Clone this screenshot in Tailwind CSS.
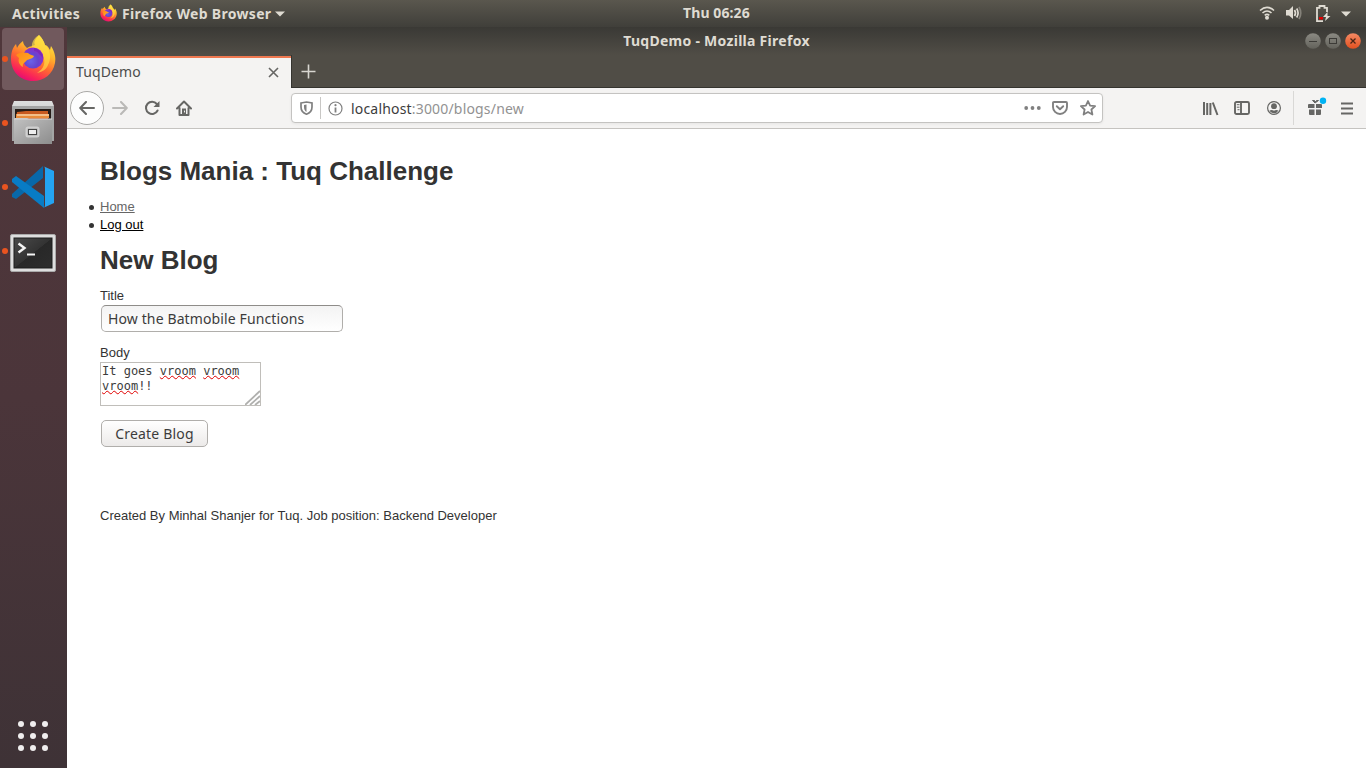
<!DOCTYPE html>
<html lang="en">
<head>
<meta charset="utf-8">
<title>TuqDemo</title>
<script src="https://cdn.jsdelivr.net/npm/@tailwindcss/browser@4"></script>
</head>
<body class="w-[1366px] h-[768px] overflow-hidden flex flex-col bg-white font-['Noto_Sans',sans-serif]">
<svg class="absolute w-0 h-0">
  <defs>
    <linearGradient id="flame" x1="0.8" y1="0" x2="0.3" y2="1"><stop offset="0" stop-color="#fff24a"/><stop offset=".35" stop-color="#ffb52b"/><stop offset=".6" stop-color="#ff6a30"/><stop offset=".85" stop-color="#fa2458"/><stop offset="1" stop-color="#e00b78"/></linearGradient>
    <linearGradient id="fox" x1="0" y1="0" x2="1" y2="1"><stop offset="0" stop-color="#ff8a16"/><stop offset="1" stop-color="#ffb129"/></linearGradient>
    <radialGradient id="globe" cx=".4" cy=".65" r=".7"><stop offset="0" stop-color="#6a62e8"/><stop offset=".5" stop-color="#6545ce"/><stop offset="1" stop-color="#9a27cf"/></radialGradient>
    <linearGradient id="metal" x1="0" y1="0" x2="1" y2="1"><stop offset="0" stop-color="#c2c2c2"/><stop offset="1" stop-color="#8d8d8d"/></linearGradient>
    <linearGradient id="metaltop" x1="0" y1="0" x2="0" y2="1"><stop offset="0" stop-color="#dedede"/><stop offset="1" stop-color="#a9a9a9"/></linearGradient>
    <linearGradient id="term" x1="0" y1="0" x2="1" y2="1"><stop offset="0" stop-color="#4a4a4a"/><stop offset=".5" stop-color="#333"/><stop offset=".51" stop-color="#282828"/><stop offset="1" stop-color="#2d2d2d"/></linearGradient>
    <linearGradient id="btn" x1="0" y1="0" x2="0" y2="1"><stop offset="0" stop-color="#8b8a83"/><stop offset="1" stop-color="#63625b"/></linearGradient>
    <linearGradient id="btnclose" x1="0" y1="0" x2="0" y2="1"><stop offset="0" stop-color="#f58a64"/><stop offset="1" stop-color="#e2501f"/></linearGradient>
    <symbol id="firefox" viewBox="0 0 46 48">
      <path d="M29 1C32 4 34 7 35 11C37 11 39 14 40 16L41 12C45 18 46 24 45 29C43 40 34 47 23 47C10 47 1 37 1 25C1 18 3 13 6 10L7 14C8 12 10 9 13 7C13 10 15 12 17 14C20 12 23 12 25 11C23 8 26 4 29 1Z" fill="url(#flame)"/>
      <path d="M29 1C32 4 34 7 35 11C40 15 42 24 38 31C36 36 32 38 27 39C34 35 36 28 33 22C30 16 24 15 22 14C21 8 25 3 29 1Z" fill="#ffe143" opacity=".65"/>
      <circle cx="23" cy="24" r="10.5" fill="url(#globe)"/>
      <path d="M6 21C9 18 14 18 18 19C20 21 23 21 24 22C23 25 19 25 17 26C15 29 12 29 13 33C9 31 8 27 9 24Z" fill="url(#fox)"/>
      <path d="M24 14C29 15 33 19 33 24L29 20C28 18 26 17 24 17Z" fill="#7a2bb8"/>
    </symbol>
  </defs>
</svg>

<header class="h-[27px] shrink-0 flex items-center relative bg-linear-to-b from-[#5a574e] to-[#403f3a] text-[#dfdbd2] text-[14px] font-bold leading-none">
  <span class="ml-3 w-[88px] whitespace-nowrap tracking-[0.3px]">Activities</span>
  <svg class="w-[17px] h-[18px] mr-[5px] -mt-0.5"><use href="#firefox"/></svg>
  <span class="w-[149px] whitespace-nowrap tracking-[0.32px]">Firefox Web Browser</span>
  <svg class="ml-[3px]" width="12" height="6"><path d="M1 0.5h10L6 5.5z" fill="#dfdbd2"/></svg>
  <span class="absolute left-[683px] top-[6px] whitespace-nowrap tracking-[0.1px]">Thu 06:26</span>
  <div class="ml-auto mr-[14px] flex items-center text-[#dfdbd2]">
    <svg class="-mt-px" width="16" height="16" viewBox="0 0 16 16" fill="none" stroke="#dfdbd2" stroke-width="1.6"><path d="M1 5.5Q8 -.8 15 5.5" /><path d="M3.500 8Q8 4 12.500 8"/><path d="M5.700 10.300Q8 8.300 10.300 10.300"/><circle cx="8" cy="12.700" r="2" fill="#dfdbd2" stroke="none"/></svg>
    <svg class="ml-[11px] -mt-px" width="16" height="16" viewBox="0 0 16 16" fill="none" stroke="#dfdbd2" stroke-width="1.700"><path d="M0 5h3l4-4v13l-4-3.500H0z" fill="#dfdbd2" stroke="none"/><path d="M8.500 5Q10.500 8 8.500 11M10.700 3.500Q13.500 8 10.700 12.500"/><path d="M13 2Q16.500 8 13 14" stroke="#85827a"/></svg>
    <svg class="ml-[13px] -mt-[2px]" width="16" height="18" viewBox="0 0 16 18"><path d="M8 17.200H2V3.800H4.500V2H9.500v1.800H12V8" fill="none" stroke="#dfdbd2" stroke-width="1.800"/><path d="M4 13h4v2.500H4z" fill="#e00000"/><path d="M12.500 8L8 13h3l-1 4L15.500 12h-3z" fill="#dfdbd2"/></svg>
    <svg class="ml-[9px]" width="12" height="6"><path d="M1 0.500h10L6 5.500z" fill="#dfdbd2"/></svg>
  </div>
</header>

<div class="flex flex-1 min-h-0">
  <aside class="w-[67px] shrink-0 flex flex-col bg-linear-to-b from-[#50373b] via-[#4b353a] to-[#3e3236] pt-px">
    <div class="h-[64px] flex items-center">
      <i class="w-[6px] h-[6px] rounded-full bg-[#e95420] ml-[2px] mb-[2px] -mr-[8px] z-10"></i>
      <div class="w-[62px] h-[62px] ml-[2px] -mt-[2px] rounded bg-[#71595d] flex items-center justify-center"><svg class="w-[46px] h-[48px] mr-px -mt-[2px]"><use href="#firefox"/></svg></div>
    </div>
    <div class="h-[64px] flex items-center">
      <i class="w-[6px] h-[6px] rounded-full bg-[#e95420] ml-[2px] mb-[2px]"></i>
      <svg class="ml-[3px] mb-[2px]" width="44" height="46" viewBox="0 0 44 46"><path d="M3 1h38l2 5v35H1V6z" fill="url(#metaltop)"/><path d="M1 6h42v35H1z" fill="#a4a4a4"/><path d="M4 9h36v11H4z" fill="#251c18"/><path d="M6 12l9-1h22v8H5z" fill="#c85a20"/><path d="M5 14h33v4H5z" fill="#e88b3b"/><path d="M6 14.500h32v1H6z" fill="#fff0d8"/><path d="M4 18h12l2 1h23v25H3V19z" fill="url(#metal)"/><path d="M3 19h38" stroke="#d8d8d8"/><rect x="15.500" y="27.500" width="12" height="9" rx="1.500" fill="#aaa" stroke="#d0d0d0" stroke-width="2"/><rect x="17.500" y="29.500" width="8" height="5" fill="#eee" stroke="#444"/></svg>
    </div>
    <div class="h-[64px] flex items-center">
      <i class="w-[6px] h-[6px] rounded-full bg-[#e95420] ml-[2px] mb-[2px]"></i>
      <svg class="ml-[3px] mb-[2px]" width="44" height="44" viewBox="0 0 44 44"><path d="M32 1L1 29v3l4 2L32 13z" fill="#0868a9"/><path d="M1 14l4-3 28 20v12L1 17z" fill="#087cc5"/><path d="M32 1l11 5v32l-11 5c1 0 2-1 2-3V4c0-2-1-3-2-3z" fill="#24a4f2"/></svg>
    </div>
    <div class="h-[64px] flex items-center">
      <i class="w-[6px] h-[6px] rounded-full bg-[#e95420] ml-[2px] mb-[2px]"></i>
      <svg class="ml-[2px] mt-[3px]" width="46" height="39" viewBox="0 0 46 39"><rect x=".5" y=".5" width="45" height="37" rx="1.500" fill="#dedede" stroke="#aaa"/><rect x="4" y="4" width="38" height="30" fill="url(#term)" stroke="#1c1c1c"/><path d="M8.500 9.500l6 4.500-6 4.500" fill="none" stroke="#f5f5f5" stroke-width="2.400"/><path d="M17 20.500h8" stroke="#f5f5f5" stroke-width="2"/></svg>
    </div>
    <div class="mt-auto mb-[17px] ml-[17px] grid grid-cols-3 gap-[6px] w-[30px]">
      <i class="size-[6px] ml-px rounded-full bg-[#f0eeee]"></i><i class="size-[6px] ml-px rounded-full bg-[#f0eeee]"></i><i class="size-[6px] ml-px rounded-full bg-[#f0eeee]"></i>
      <i class="size-[6px] ml-px rounded-full bg-[#f0eeee]"></i><i class="size-[6px] ml-px rounded-full bg-[#f0eeee]"></i><i class="size-[6px] ml-px rounded-full bg-[#f0eeee]"></i>
      <i class="size-[6px] ml-px rounded-full bg-[#f0eeee]"></i><i class="size-[6px] ml-px rounded-full bg-[#f0eeee]"></i><i class="size-[6px] ml-px rounded-full bg-[#f0eeee]"></i>
    </div>
  </aside>

  <main class="flex-1 flex flex-col min-w-0">
    <div class="h-[28px] shrink-0 flex items-center justify-center relative bg-linear-to-b from-[#3a3935] to-[#504d46] text-[#dfdbd2] text-[14px] font-bold leading-none">
      <span class="whitespace-nowrap tracking-[0.28px]">TuqDemo - Mozilla Firefox</span>
      <div class="absolute right-[5px] top-[6px] flex gap-[4px]">
        <svg width="16" height="16"><circle cx="8" cy="8" r="7.800" fill="url(#btn)"/><path d="M4 8.500h8" stroke="#3c3b37"/></svg>
        <svg width="16" height="16"><circle cx="8" cy="8" r="7.800" fill="url(#btn)"/><rect x="4.500" y="5.500" width="7" height="5" fill="none" stroke="#3c3b37"/></svg>
        <svg width="16" height="16"><circle cx="8" cy="8" r="7.800" fill="url(#btnclose)"/><path d="M5.500 5.500l5 5M10.500 5.500l-5 5" stroke="#4a2415" stroke-width="1.300"/></svg>
      </div>
    </div>
    <div class="h-[33px] shrink-0 flex bg-[#504d46]">
      <div class="w-[224px] flex items-center bg-[#f4f3f2] border-t-2 border-[#ef7850] mt-px text-[14px] text-[#4c4c4c]">
        <span class="ml-[9px] mt-[-3px] tracking-[0.12px]">TuqDemo</span>
        <svg class="ml-auto mr-[12px] -mt-[2px]" width="11" height="11"><path d="M1 1l9 9M10 1l-9 9" stroke="#666664" stroke-width="1.600"/></svg>
      </div>
      <div class="flex-1 flex items-center border-l border-b border-[#35342f]"><svg class="ml-[9px]" width="15" height="15"><path d="M7.500 .5v14M.5 7.500h14" stroke="#d8d6d0" stroke-width="1.600"/></svg></div>
    </div>
    <div class="h-[41px] shrink-0 flex items-center bg-[#f4f3f2] border-b border-[#c5c3c0] text-[#5d5d5c]">
      <div class="ml-[3px] size-[34px] rounded-full bg-[#fdfdfd] border border-[#aaa9a7] flex items-center justify-center"><svg width="16" height="14" viewBox="0 0 16 14" fill="none" stroke="#666664" stroke-width="2" stroke-linecap="round" stroke-linejoin="round"><path d="M15 7H1.500M7 1L1.200 7 7 13"/></svg></div>
      <svg class="ml-[8px]" width="16" height="14" viewBox="0 0 16 14" fill="none" stroke="#bab9b7" stroke-width="2" stroke-linecap="round" stroke-linejoin="round"><path d="M1 7h13.500M9 1l5.800 6L9 13"/></svg>
      <svg class="ml-[16px]" width="16" height="16" viewBox="0 0 16 16"><path d="M12.800 4A6.100 6.100 0 1 0 13.600 10.500" fill="none" stroke="#666664" stroke-width="2" stroke-linecap="round"/><path d="M15.500 1v6h-6z" fill="#666664"/></svg>
      <svg class="ml-[16px]" width="16" height="16" viewBox="0 0 16 16" fill="none" stroke="#666664" stroke-width="2" stroke-linecap="round" stroke-linejoin="round"><path d="M1 8.500L8 1.500l7 7M3.500 8v7h9V8"/><path d="M6 8.500h4V14H6z" fill="#666664" stroke="none"/><path d="M8.500 11v1" stroke="#f4f3f2" stroke-width="1"/></svg>

      <div class="ml-[99px] w-[812px] h-[30px] rounded-[4px] border border-[#c4c3c1] bg-white flex items-center shadow-[0_1px_3px_rgba(0,0,0,.06)]">
        <svg class="ml-[8px]" width="13" height="14" viewBox="0 0 13 14"><path d="M1 2L6.500 1 12 2V6C12 9.500 10 12 6.500 13.200C3 12 1 9.500 1 6Z" fill="none" stroke="#808080" stroke-width="1.700"/><path d="M6.500 3.500L4 4V6C4 8.500 5 10 6.500 11z" fill="#808080"/></svg>
        <i class="ml-[7px] w-px h-[22px] bg-[#c8c7c5]"></i>
        <svg class="ml-[7px]" width="15" height="15" viewBox="0 0 15 15"><circle cx="7.500" cy="7.500" r="6.500" fill="none" stroke="#808080" stroke-width="1.200"/><path d="M7.500 6.500v5" stroke="#808080" stroke-width="1.800"/><circle cx="7.500" cy="4.200" r="1.100" fill="#808080"/></svg>
        <span class="ml-[8px] text-[14px] text-[#3c3c3c] whitespace-nowrap tracking-[0.18px]">localhost<span class="text-[#929292]">:3000/blogs/new</span></span>
        <svg class="ml-auto" width="17" height="4"><circle cx="2.200" cy="2" r="1.900" fill="#808080"/><circle cx="8.500" cy="2" r="1.900" fill="#808080"/><circle cx="14.800" cy="2" r="1.900" fill="#808080"/></svg>
        <svg class="ml-[11px]" width="16" height="14" viewBox="0 0 16 14" fill="none" stroke="#808080" stroke-width="1.900" stroke-linecap="round" stroke-linejoin="round"><path d="M2 1h12q1 0 1 1v4a7 7 0 0 1-14 0V2q0-1 1-1zM4.800 5.200L8 8.200l3.200-3"/></svg>
        <svg class="ml-[12px] mr-[6px]" width="16" height="16" viewBox="0 0 16 16" fill="none" stroke="#808080" stroke-width="1.800" stroke-linejoin="round"><path d="M8 1l2.100 4.600 5 .5-3.700 3.400 1 5L8 12l-4.400 2.500 1-5L.9 6.100l5-.5z"/></svg>
      </div>
      <svg class="ml-[100px]" width="16" height="15" viewBox="0 0 16 15" fill="none" stroke="#666664" stroke-width="2"><path d="M1 1v13M4.200 2v12M7.400 2v12M9.800 1.500L14.500 14"/></svg>
      <svg class="ml-[15px]" width="16" height="14" viewBox="0 0 16 14" fill="none" stroke="#666664" stroke-width="1.900"><rect x="1" y="1" width="14" height="12" rx="1.500"/><path d="M7 1v12"/><path d="M2.800 3.700H5.500M2.800 6.200H5.500M3.500 8.700H5.500" stroke-width="1"/></svg>
      <svg class="ml-[17px]" width="14" height="14" viewBox="0 0 14 14"><circle cx="7" cy="7" r="6.400" fill="none" stroke="#666664" stroke-width="1.200"/><circle cx="7" cy="5.200" r="2.900" fill="#666664"/><path d="M2.500 9.500Q5 8.500 7 9.800Q9 8.500 11.500 9.500Q10 12.200 7 12.200T2.500 9.500" fill="#666664"/></svg>
      <i class="ml-[12px] w-px h-[34px] bg-[#d9d8d6]"></i>
      <svg class="ml-[14px] mb-[4px]" width="20" height="19" viewBox="0 0 20 19"><path d="M0 8q0-1 1-1h5.500v4H0zM8 7h5q1 0 1 1v3H8zM1 12.500h5.500V18H2q-1 0-1-1zM8 12.500h5V17q0 1-1 1H8z" fill="#666664"/><path d="M7 6L4.500 3.500h2l1 1 1-1h2z" fill="#666664" stroke="#666664"/><circle cx="15" cy="3.800" r="3.200" fill="#00b3f4"/></svg>
      <svg class="ml-[13px]" width="12" height="13"><path d="M0 1.500h12M0 6.500h12M0 11.500h12" stroke="#666664" stroke-width="2"/></svg>
    </div>

    <section class="flex-1 bg-white pl-[33px] text-[#333] font-['Liberation_Sans',Arial,sans-serif] text-[13px] leading-[18px]">
      <h1 class="mt-[33px] text-[26px] leading-[18px] font-bold">Blogs Mania : Tuq Challenge</h1>
      <ul class="mt-[18px]">
        <li class="flex items-center"><i class="size-[5px] rounded-full bg-[#333] -ml-[11.500px] mr-[6.500px] mt-px mb-px"></i><a class="underline text-[#666]">Home</a></li>
        <li class="flex items-center"><i class="size-[5px] rounded-full bg-[#333] -ml-[11.500px] mr-[6.500px] mt-px mb-px"></i><a class="underline text-black">Log out</a></li>
      </ul>
      <h1 class="mt-[17px] text-[26px] leading-[18px] font-bold">New Blog</h1>
      <div class="mt-[18px]">Title</div>
      <div class="ml-px w-[242px] h-[27px] rounded-[5px] border border-[#b0aeab] border-t-[#8e8c89] bg-linear-to-b from-[#f3f3f3] to-white pl-[6px] flex items-center font-['Noto_Sans',sans-serif] text-[14px] text-[#3c3c3c] whitespace-nowrap tracking-[0.12px]">How the Batmobile Functions</div>
      <div class="mt-[12px]">Body</div>
      <div class="relative w-[161px] h-[44px] border border-[#c0beba] px-px pt-px font-['DejaVu_Sans_Mono',monospace] text-[12px] leading-[15px] text-[#3c3c3c] whitespace-nowrap">
        It goes <span class="underline decoration-wavy decoration-[#e00000] decoration-[1.2px] underline-offset-[0px] [text-decoration-skip-ink:none]">vroom</span> <span class="underline decoration-wavy decoration-[#e00000] decoration-[1.2px] underline-offset-[0px] [text-decoration-skip-ink:none]">vroom</span><br><span class="underline decoration-wavy decoration-[#e00000] decoration-[1.2px] underline-offset-[0px] [text-decoration-skip-ink:none]">vroom</span>!!
        <svg class="absolute right-0 bottom-0" width="15" height="15"><path d="M0 15L15 1M5 15L15 6M10 15l5-4" stroke="#b0b0ae" stroke-width="1.800"/></svg>
      </div>
      <div class="mt-[14px] ml-px w-[107px] h-[27px] rounded-[5px] border border-[#b0aeab] bg-linear-to-b from-white to-[#eceae9] flex items-center justify-center font-['Noto_Sans',sans-serif] text-[14px] text-[#3c3c3c] whitespace-nowrap tracking-[0.2px]">Create Blog</div>
      <p class="mt-[60px]">Created By Minhal Shanjer for Tuq. Job position: Backend Developer</p>
    </section>
  </main>
</div>
</body>
</html>
